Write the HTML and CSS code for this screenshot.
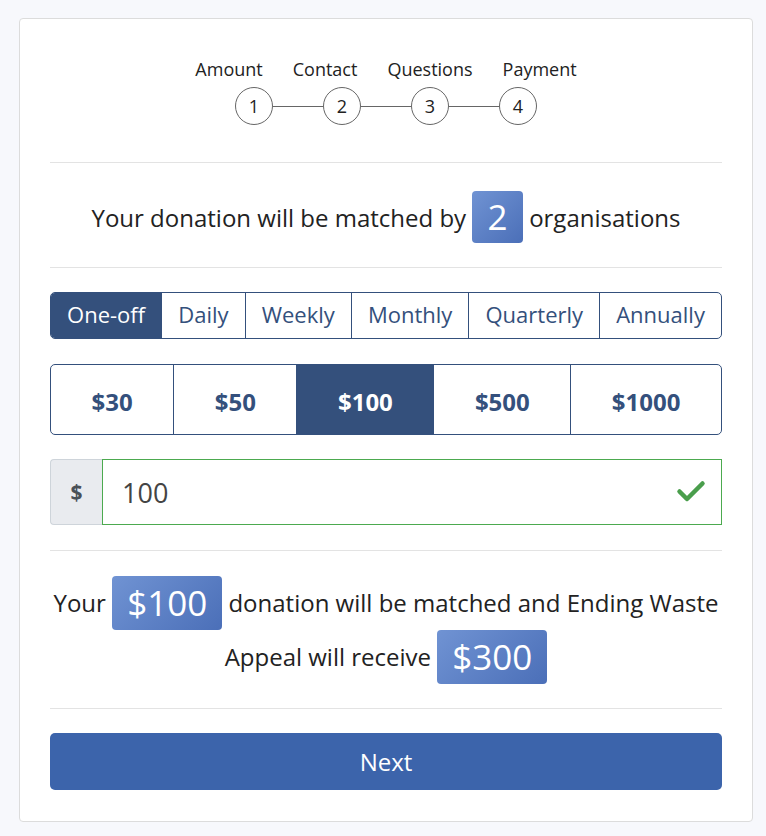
FILE: index.html
```html
<!DOCTYPE html>
<html>
<head>
<meta charset="utf-8">
<link rel="stylesheet" href="styles.css">
</head>
<body>
<div class="card">
  <div class="steps">
    <div class="step-labels">
      <span>Amount</span><span>Contact</span><span>Questions</span><span>Payment</span>
    </div>
    <div class="step-circles">
      <span class="circle">1</span><span class="line"></span>
      <span class="circle">2</span><span class="line"></span>
      <span class="circle">3</span><span class="line"></span>
      <span class="circle">4</span>
    </div>
  </div>
  <hr class="divider">
  <div class="matched">Your donation will be matched by <span class="badge badge-sm">2</span> organisations</div>
  <hr class="divider">
  <div class="seg freq">
    <span class="active">One-off</span><span>Daily</span><span>Weekly</span><span>Monthly</span><span>Quarterly</span><span>Annually</span>
  </div>
  <div class="seg amounts">
    <span>$30</span><span>$50</span><span class="active">$100</span><span>$500</span><span>$1000</span>
  </div>
  <div class="input-group">
    <span class="prefix">$</span>
    <div class="field">
      <span class="value">100</span>
      <svg class="check" width="30" height="24" viewBox="0 0 30 24"><path d="M3.5 12.5 L11 20 L26.5 4.5" fill="none" stroke="#4a9e4c" stroke-width="4.5" stroke-linecap="round" stroke-linejoin="round"/></svg>
    </div>
  </div>
  <hr class="divider">
  <div class="result">Your <span class="badge">$100</span> donation will be matched and Ending Waste Appeal will receive <span class="badge">$300</span></div>
  <hr class="divider">
  <button class="next">Next</button>
</div>
</body>
</html>
```
FILE: styles.css
```css
* { box-sizing: border-box; }
html, body { margin: 0; padding: 0; }
body {
  background: #f7f8fc;
  font-family: "Open Sans", "Noto Sans", sans-serif;
  color: #222;
}
.card {
  margin: 18px 0 0 19px;
  width: 734px;
  height: 804px;
  background: #fff;
  border: 1px solid #dcdcdc;
  border-radius: 4px;
  padding: 38px 30px 0 30px;
}
.steps { display: flex; flex-direction: column; align-items: center; }
.step-labels {
  display: flex;
  gap: 30px;
  font-size: 18px;
  line-height: 24px;
  color: #222;
}
.step-circles {
  display: flex;
  align-items: center;
  margin-top: 6px;
}
.circle {
  width: 38px;
  height: 38px;
  border: 1px solid #666;
  border-radius: 50%;
  display: flex;
  align-items: center;
  justify-content: center;
  font-size: 18px;
  color: #222;
}
.line { width: 50px; height: 1px; background: #666; }
.divider {
  border: 0;
  border-top: 1px solid #e3e3e3;
  margin: 0;
  height: 0;
}
.steps + .divider { margin-top: 37px; }
.matched {
  padding: 28px 0 24px;
  font-size: 24px;
  height: 104px;
  display: flex;
  align-items: center;
  justify-content: center;
  gap: 6px;
}
.badge {
  display: inline-block;
  background: linear-gradient(135deg, #7093d3 0%, #4b6fb8 100%);
  color: #fff;
  border-radius: 4px;
  font-size: 35px;
  line-height: 54px;
  height: 54px;
  padding: 0 15px;
  vertical-align: top;
}
.badge-sm { width: 51px; height: 52px; line-height: 52px; padding: 0; text-align: center; }
.seg {
  display: flex;
  border: 1px solid #34507c;
  border-radius: 5px;
  overflow: hidden;
  color: #34507c;
  margin-top: 24px;
}
.seg span {
  flex: 1 1 auto;
  display: flex;
  align-items: center;
  justify-content: center;
  border-left: 1px solid #34507c;
}
.seg span:first-child { border-left: 0; }
.seg span.active { background: #34507c; color: #fff; }
.freq { height: 47px; font-size: 22px; }
.freq span { padding-bottom: 4px; }
.amounts { height: 71px; font-size: 24px; font-weight: 700; margin-top: 25px; }
.amounts span { padding-top: 3px; }
.input-group {
  display: flex;
  height: 66px;
  margin-top: 24px;
  margin-bottom: 25px;
}
.prefix {
  width: 52px;
  background: #e9ebef;
  border: 1px solid #ced4da;
  border-right: 0;
  border-radius: 4px 0 0 4px;
  display: flex;
  align-items: center;
  justify-content: center;
  font-size: 21px;
  font-weight: 700;
  color: #495057;
}
.field {
  flex: 1;
  border: 1px solid #4caa4f;
  display: flex;
  align-items: center;
  justify-content: space-between;
  padding: 0 15px 0 19px;
}
.value { font-size: 27px; color: #444; }
.check { margin-top: -2px; }
.result {
  padding: 25px 0 24px;
  margin: 0 -10px;
  text-align: center;
  font-size: 24px;
  line-height: 54px;
}
.next {
  display: block;
  width: 100%;
  height: 57px;
  margin-top: 24px;
  background: #3c64ab;
  color: #fff;
  border: 0;
  border-radius: 5px;
  font-family: "Open Sans", "Noto Sans", sans-serif;
  font-size: 24px;
}
```
